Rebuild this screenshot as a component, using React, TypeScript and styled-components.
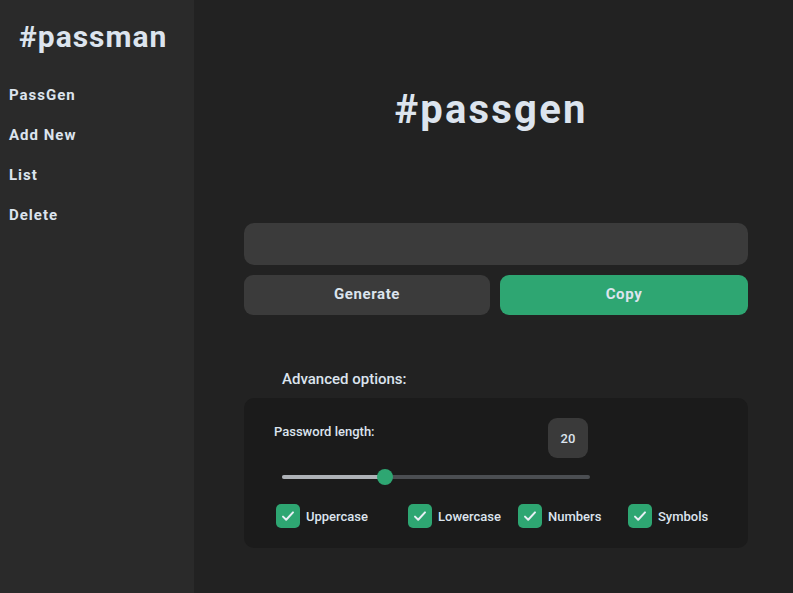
import React, { useState } from "react";
import styled, { createGlobalStyle } from "styled-components";

const Global = createGlobalStyle`
  html, body { margin: 0; padding: 0; background: #222222; }
  body { font-family: Roboto, "Liberation Sans", sans-serif; color: #dce4ee; }
  * { box-sizing: border-box; }
`;

const Shell = styled.div`
  display: flex;
  width: 793px;
  height: 593px;
  overflow: hidden;
`;

const Sidebar = styled.nav`
  width: 194px;
  flex: none;
  background: #2a2a2a;
  display: flex;
  flex-direction: column;
  padding-top: 18px;
`;

const Brand = styled.h1`
  margin: 0 0 24px;
  padding-left: 19px;
  font-size: 30px;
  line-height: 38px;
  font-weight: 700;
  color: #dce4ee;
  letter-spacing: 1px;
`;

const NavItem = styled.a`
  display: block;
  padding: 0 9px;
  height: 40px;
  line-height: 30px;
  font-size: 15px;
  font-weight: 700;
  letter-spacing: 1px;
  color: #dce4ee;
  cursor: pointer;
`;

const Main = styled.main`
  flex: 1;
  display: flex;
  justify-content: center;
  padding-left: 5px;
`;

const Column = styled.div`
  width: 504px;
  display: flex;
  flex-direction: column;
  padding-top: 86px;
`;

const Title = styled.h2`
  margin: 0 0 89px;
  font-size: 40px;
  line-height: 48px;
  font-weight: 700;
  text-align: center;
  letter-spacing: 2.2px;
  color: #dce4ee;
  transform: translateX(-5px);
`;

const Output = styled.input`
  height: 42px;
  border: none;
  border-radius: 10px;
  background: #3b3b3b;
  color: #dce4ee;
  font-family: inherit;
  font-size: 15px;
  padding: 0 14px;
  outline: none;
`;

const ButtonRow = styled.div`
  display: grid;
  grid-template-columns: 246px 248px;
  gap: 10px;
  margin-top: 10px;
`;

const Button = styled.button<{ $primary?: boolean }>`
  height: 40px;
  border: none;
  border-radius: 9px;
  background: ${(p) => (p.$primary ? "#2ea672" : "#3b3b3b")};
  color: #dce4ee;
  font-family: inherit;
  font-size: 15px;
  font-weight: 700;
  letter-spacing: 0.6px;
  padding: 0 0 2px;
  cursor: pointer;
`;

const SectionLabel = styled.div`
  margin: 54px 0 0 38px;
  font-size: 15px;
  line-height: 20px;
  font-weight: 500;
  color: #dce4ee;
`;

const Panel = styled.section`
  margin-top: 9px;
  background: #1b1b1b;
  border-radius: 10px;
  height: 150px;
  padding: 20px 0 0 30px;
  display: flex;
  flex-direction: column;
`;

const LengthRow = styled.div`
  display: flex;
  justify-content: space-between;
  width: 314px;
`;

const SmallLabel = styled.span`
  font-size: 13px;
  font-weight: 500;
  line-height: 16px;
  margin-top: 6px;
`;

const ValueBox = styled.div`
  width: 40px;
  height: 40px;
  border-radius: 9px;
  background: #3a3a3a;
  display: flex;
  align-items: center;
  justify-content: center;
  font-size: 13px;
  font-weight: 500;
`;

const SliderWrap = styled.div`
  position: relative;
  margin: 17px 0 0 8px;
  width: 308px;
  height: 4px;
  border-radius: 2px;
  background: #4b4e52;
`;

const SliderFill = styled.div`
  height: 100%;
  border-radius: 2px;
  background: #aeb2b7;
`;

const Thumb = styled.div`
  position: absolute;
  top: 50%;
  width: 16px;
  height: 16px;
  border-radius: 50%;
  background: #2ea672;
  transform: translate(-50%, -50%);
`;

const Checks = styled.div`
  display: grid;
  grid-template-columns: 132px 110px 110px auto;
  margin: 24px 0 0 2px;
`;

const CheckItem = styled.label`
  display: flex;
  align-items: center;
  gap: 6px;
  font-size: 13px;
  font-weight: 500;
  line-height: 24px;
  cursor: pointer;
`;

const LabelText = styled.span`
  padding-top: 2px;
`;

const Box = styled.span`
  width: 24px;
  height: 24px;
  border-radius: 5px;
  background: #2ea672;
  display: flex;
  align-items: center;
  justify-content: center;
`;

const Check = () => (
  <svg width="16" height="16" viewBox="0 0 16 16" fill="none">
    <path d="M3 8.6l3.2 3.2L13 4.4" stroke="#e8eef5" strokeWidth="2" strokeLinecap="round" strokeLinejoin="round" />
  </svg>
);

export default function App() {
  const [len] = useState(20);
  const min = 5;
  const max = 50;
  const pct = ((len - min) / (max - min)) * 100;
  const opts = ["Uppercase", "Lowercase", "Numbers", "Symbols"];
  return (
    <>
      <Global />
      <Shell>
        <Sidebar>
          <Brand>#passman</Brand>
          <NavItem>PassGen</NavItem>
          <NavItem>Add New</NavItem>
          <NavItem>List</NavItem>
          <NavItem>Delete</NavItem>
        </Sidebar>
        <Main>
          <Column>
            <Title>#passgen</Title>
            <Output readOnly value="" />
            <ButtonRow>
              <Button>Generate</Button>
              <Button $primary>Copy</Button>
            </ButtonRow>
            <SectionLabel>Advanced options:</SectionLabel>
            <Panel>
              <LengthRow>
                <SmallLabel>Password length:</SmallLabel>
                <ValueBox>{len}</ValueBox>
              </LengthRow>
              <SliderWrap>
                <SliderFill style={{ width: `${pct}%` }} />
                <Thumb style={{ left: `${pct}%` }} />
              </SliderWrap>
              <Checks>
                {opts.map((o) => (
                  <CheckItem key={o}>
                    <Box>
                      <Check />
                    </Box>
                    <LabelText>{o}</LabelText>
                  </CheckItem>
                ))}
              </Checks>
            </Panel>
          </Column>
        </Main>
      </Shell>
    </>
  );
}
